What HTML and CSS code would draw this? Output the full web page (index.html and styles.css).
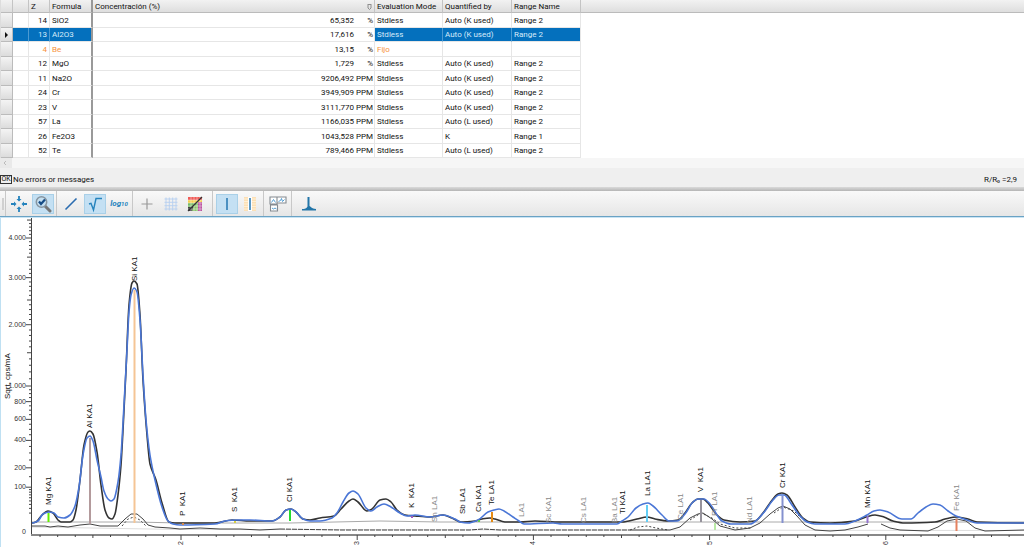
FILE: index.html
```html
<!DOCTYPE html>
<html lang="es">
<head>
    <meta charset="UTF-8">
    <meta name="viewport" content="width=device-width, initial-scale=1.0">
    <title>Spectrum</title>
    <link rel="stylesheet" href="styles.css">
</head>
<body>
    <div class="results">
        <table class="results__table">
            <colgroup>
                <col class="col-mark"><col class="col-flag"><col class="col-z"><col class="col-formula">
                <col class="col-conc"><col class="col-mode"><col class="col-quant"><col class="col-range"><col>
            </colgroup>
            <thead>
                <tr><th></th><th></th><th>Z</th><th>Formula</th><th><div class="sort">Concentración (%)<svg class="sort__icon" viewBox="0 0 5 6"><path d="M.5 .5h4M1 1v3l1.500 1.500L4 4V1" fill="none" stroke="#777" stroke-width=".8"/></svg></div></th><th>Evaluation Mode</th><th>Quantified by</th><th>Range Name</th><th></th></tr>
            </thead>
            <tbody>
                <tr><td></td><td></td><td>14</td><td>SiO2</td><td>65,352<span class="unit">%</span></td><td>Stdless</td><td>Auto (K used)</td><td>Range 2</td><td></td></tr>
                <tr class="selected"><td><i class="marker"></i></td><td></td><td>13</td><td>Al2O3</td><td>17,616<span class="unit">%</span></td><td>Stdless</td><td>Auto (K used)</td><td>Range 2</td><td></td></tr>
                <tr class="fixed"><td></td><td></td><td>4</td><td>Be</td><td>13,15<span class="unit">%</span></td><td>Fijo</td><td></td><td></td><td></td></tr>
                <tr><td></td><td></td><td>12</td><td>MgO</td><td>1,729<span class="unit">%</span></td><td>Stdless</td><td>Auto (K used)</td><td>Range 2</td><td></td></tr>
                <tr><td></td><td></td><td>11</td><td>Na2O</td><td>9206,492<span class="unit">PPM</span></td><td>Stdless</td><td>Auto (K used)</td><td>Range 2</td><td></td></tr>
                <tr><td></td><td></td><td>24</td><td>Cr</td><td>3949,909<span class="unit">PPM</span></td><td>Stdless</td><td>Auto (K used)</td><td>Range 2</td><td></td></tr>
                <tr><td></td><td></td><td>23</td><td>V</td><td>3111,770<span class="unit">PPM</span></td><td>Stdless</td><td>Auto (K used)</td><td>Range 2</td><td></td></tr>
                <tr><td></td><td></td><td>57</td><td>La</td><td>1166,035<span class="unit">PPM</span></td><td>Stdless</td><td>Auto (L used)</td><td>Range 2</td><td></td></tr>
                <tr><td></td><td></td><td>26</td><td>Fe2O3</td><td>1043,528<span class="unit">PPM</span></td><td>Stdless</td><td>K</td><td>Range 1</td><td></td></tr>
                <tr><td></td><td></td><td>52</td><td>Te</td><td>789,466<span class="unit">PPM</span></td><td>Stdless</td><td>Auto (L used)</td><td>Range 2</td><td></td></tr>
            </tbody>
        </table>
        <div class="scrollbar"><button class="scrollbar__button" aria-label="Scroll left"><svg viewBox="0 0 8 8"><path d="M5 2L3 4l2 2" fill="none" stroke="#bbb"/></svg></button></div>
    </div>

    <div class="status">
        <span class="status__ok">OK</span>
        <span>No errors or messages</span>
        <span class="status__ratio">R/R₀ =2,9</span>
    </div>
    <div class="splitter"></div>

    <div class="toolbar">
        <span class="toolbar__grip"></span>
        <div class="toolbar__group">
            <button class="tool" aria-label="Fit"><svg viewBox="0 0 18 18"><g fill="#2583bd"><path d="M9 6.500L6.500 4h1.600V1h1.800v3h1.600zM9 11.500L6.500 14h1.600v3h1.800v-3h1.600zM6.500 9L4 6.500v1.600H1v1.800h3v1.600zM11.500 9L14 6.500v1.600h3v1.800h-3v1.600z"/></g></svg></button>
            <button class="tool tool--on" aria-label="Zoom"><svg viewBox="0 0 18 18"><path d="M11 11l5 5" stroke="#777" stroke-width="3" stroke-linecap="round"/><circle cx="7.500" cy="7" r="5.200" fill="#c4dff0" stroke="#8795a0" stroke-width="1.500"/><path d="M5 6.500l2 2.500 4-4.500" fill="none" stroke="#164c86" stroke-width="2.200"/></svg></button>
        </div>
        <div class="toolbar__group">
            <button class="tool" aria-label="Linear"><svg viewBox="0 0 18 18"><path d="M3.500 14.500l11-11" stroke="#2b6cb0" stroke-width="1.600"/></svg></button>
            <button class="tool tool--on" aria-label="Square root"><svg viewBox="0 0 18 18"><path d="M3 9l2-.7L7.500 15 10 3.500h6" fill="none" stroke="#2583bd" stroke-width="1.400"/></svg></button>
            <button class="tool tool--log" aria-label="Logarithm">log<sub>10</sub></button>
        </div>
        <div class="toolbar__group toolbar__group--wide">
            <button class="tool" aria-label="Cursor"><svg viewBox="0 0 18 18"><path d="M9 3.500v11M3.500 9h11" stroke="#999" stroke-width="1.200"/></svg></button>
            <button class="tool" aria-label="Grid"><svg viewBox="0 0 18 18"><path d="M4 2.500v13M7.300 2.500v13M10.700 2.500v13M14 2.500v13M2.500 4h13M2.500 7.300h13M2.500 10.700h13M2.500 14h13" stroke="#b6cff0" stroke-width=".9"/></svg></button>
            <button class="tool" aria-label="Colours"><svg viewBox="0 0 18 18"><path fill="#f05b56" d="M2 2h14v3H2z"/><path fill="#f4cf4d" d="M2 5h14v3H2z"/><path fill="#77bb65" d="M2 8h14v4H2z"/><path fill="#444" d="M2 12h14v4H2z"/><path fill="#8cc46c" d="M8 10h4v6H6z"/><path fill="#bb52a0" d="M12 7h4v9h-4z"/><path d="M5 2v14M8 2v14M11 2v14M14 2v14M2 5h14M2 8h14M2 11h14M2 14h14" stroke="#fff" stroke-width=".6" opacity=".7"/><path d="M2 16L16 2" stroke="#333" stroke-width="1.200"/></svg></button>
        </div>
        <div class="toolbar__group toolbar__group--lines">
            <button class="tool tool--on" aria-label="Single line"><svg viewBox="0 0 18 18"><path d="M9 3v12" stroke="#2376b0" stroke-width="1.500"/></svg></button>
            <button class="tool" aria-label="Line with range"><svg viewBox="0 0 18 18"><path fill="#fff0d6" d="M3 2h12v14H3z"/><path d="M4 2v14M6 2v14M12 2v14M14 2v14" stroke="#f8cf93" stroke-dasharray="1.500 1"/><path fill="#fff" d="M7 2h4v14H7z"/><path d="M9 3v12" stroke="#2376b0" stroke-width="1.500"/></svg></button>
        </div>
        <div class="toolbar__group">
            <button class="tool" aria-label="Windows"><svg viewBox="0 0 18 18"><g fill="#fff" stroke="#858b91" stroke-width="1.100"><path d="M1 2h7v7H1zM8 2h9v6H8zM1.500 10h7v6h-7z"/></g><path d="M2.500 7.500l2-3 2 3M9.500 6.500l2-1 1-2 1 3 2-2M3 13l1.500 1L6 13l1.500 1" fill="none" stroke="#4293cd" stroke-width=".9"/></svg></button>
        </div>
        <div class="toolbar__group toolbar__group--last">
            <button class="tool" aria-label="Peak"><svg viewBox="0 0 18 18"><path d="M2 15.500v-1.500c3 0 4.500-.5 5.500-2.500V2h2v9c1 0 2 3 6.500 3v1.500z" fill="#2275a8"/></svg></button>
        </div>
    </div>

    <div class="chart">
        <svg class="chart__svg" viewBox="0 218 1024 329">
            <g class="background">
                <path d="M32 522H135L180 523H290L380 521L440 522H1024"/>
                <path class="background--low" d="M32 527L180 529.500 1024 530.500"/>
            </g>
            <g class="scatter">
                <polyline points="32,526 45,526 50,527 58,526 68,527 80,525 90,524 100,526 118,526 125,519 131,514 137,514 143,519 148,525 155,527 170,528 180,529 200,528 220,529 240,529 260,530 280,529"/>
                <polyline class="dash" points="280,529 340,530 400,530 470,530 483,529 500,530 630,530"/>
                <polyline class="dots" points="630,530 638,527 647,526 656,528 668,530"/>
                <polyline points="630,530 670,530 680,527 690,518 698,514 703,513 712,519 720,526 735,530 750,528 760,523 770,514 778,508 783,506 790,509 797,516 805,525 815,530 830,531 845,530 858,527 868,524"/>
                <polyline points="881,524 890,528 900,530 928,531 938,527 947,521 957,519 966,521 975,528 985,531 1024,530"/>
                <polyline class="dots" points="122,526 128,519 134,517 140,520 146,526"/>
                <polyline class="dots" points="690,520 701,513 712,518 720,524 735,528 752,528"/>
                <polyline class="dots" points="774,513 783,507 794,511 801,518"/>
            </g>
            <g id="curves"></g>
            <g class="lines">
                <path stroke="#66f000" d="M48.500 513V522"/>
                <path stroke="#b39a9c" d="M90 438V524"/>
                <path stroke="#f5c595" d="M134.500 290V523"/>
                <path stroke="#25dc31" d="M290 510V521"/>
                <path stroke="#e58a13" d="M492 512V522"/>
                <path stroke="#63cef5" d="M647 505V522"/>
                <path stroke="#96939c" d="M701 500V522"/>
                <path stroke="#b9eaa5" d="M715 523V530"/>
                <path stroke="#8491cf" d="M782.500 496V523"/>
                <path stroke="#9573cf" d="M867.500 516V523"/>
                <path stroke="#e5815f" d="M956.500 519V531"/>
                <path stroke="#d88a4a" d="M182 524h2"/>
                <path stroke="#d8d040" d="M234 522h2"/>
                <path stroke="#a35cc0" d="M411 517h2"/>
                <path stroke="#63c850" d="M478 521h2"/>
            </g>
            <g id="axes" class="axes"></g>
            <g id="labels" class="labels"></g>
        </svg>
    </div>
    <script src="chart.js"></script>
</body>
</html>
```
FILE: styles.css
```css
* {
    box-sizing: border-box;
}
body {
    margin: 0;
    background: #fff;
    color: #111;
    font-family: Roboto, sans-serif;
    font-size: 8px;
    line-height: 12px;
}
button {
    padding: 0;
    border: 1px solid transparent;
    background: transparent;
    font: inherit;
}
.results__table {
    width: 100%;
    table-layout: fixed;
    border-collapse: separate;
    border-spacing: 0;
    border-left: 1px solid #ddd;
}
.col-mark { width: 12px; }
.col-flag { width: 16px; }
.col-z { width: 21px; }
.col-formula { width: 43px; }
.col-conc { width: 282px; }
.col-mode { width: 68px; }
.col-quant { width: 69px; }
.col-range { width: 69px; }
th,
td {
    height: 14px;
    padding: 1px 2px 0;
    border-right: 1px solid #e6e6e6;
    border-bottom: 1px solid #e6e6e6;
    text-align: left;
    font-weight: normal;
    white-space: nowrap;
    line-height: 12px;
}
th {
    height: 13px;
    border-right-color: #c4c4c4;
    border-bottom-color: #bbb;
    background: linear-gradient(#f2f2f2, #dedede);
    line-height: 11px;
}
tbody tr:nth-child(odd) td {
    height: 15px;
}
td:nth-child(3) {
    text-align: right;
}
th:nth-child(4),
td:nth-child(4) {
    border-right: 2px solid #999;
}
td:nth-child(5) {
    padding-right: 1px;
    text-align: right;
}
td:first-child {
    padding: 0 4px;
    border-right-color: #bbb;
    border-bottom-color: #bbb;
    background: linear-gradient(#f4f4f4, #dcdcdc);
}
th:last-child,
td:last-child {
    border-right: 0;
}
td:last-child {
    border-bottom: 0;
}
.sort {
    display: flex;
    align-items: center;
    justify-content: space-between;
}
.sort__icon {
    width: 5px;
    height: 6px;
}
.unit {
    display: inline-block;
    width: 19px;
}
.marker {
    display: block;
    width: 0;
    border: 3px solid transparent;
    border-left: 3px solid #111;
    border-right: 0;
}
.selected td:nth-child(n+2):nth-child(-n+4),
.selected td:nth-child(n+6):nth-child(-n+8) {
    background: #0470bd;
    color: #d6ebfa;
}
.selected td:nth-child(2),
.selected td:nth-child(3),
.selected td:nth-child(6),
.selected td:nth-child(7) {
    border-right-color: #4c9ad2;
}
.fixed td {
    color: #f7933a;
}
.fixed td:nth-child(5) {
    color: #111;
}
.scrollbar {
    height: 10px;
    background: #f6f6f6;
}
.scrollbar__button {
    display: block;
    width: 12px;
    height: 10px;
    background: #e9e9e9;
}
.scrollbar__button svg {
    display: block;
    width: 8px;
    height: 8px;
}
.status {
    display: flex;
    align-items: center;
    gap: 1px;
    height: 19px;
    padding: 4px 7px 0 0;
    background: #efefef;
}
.status__ok {
    width: 12px;
    border: 1px solid #333;
    line-height: 7px;
    text-align: center;
    font-size: 7px;
}
.status__ratio {
    margin-left: auto;
}
.splitter {
    height: 4px;
    background: linear-gradient(#dadada, #b5b5b5);
}
.toolbar {
    display: flex;
    align-items: center;
    height: 26px;
    border-bottom: 1px solid #6aa2c4;
    background: linear-gradient(#f9f9f9, #e6e6e6);
}
.toolbar__grip {
    width: 2px;
    height: 12px;
    margin: 0 1px 0 2px;
    background: #d0d0d0;
}
.toolbar__group {
    display: flex;
    align-items: center;
    gap: 2px;
    height: 100%;
    padding: 0 2px;
    border-left: 1px solid #c8c8c8;
}
.toolbar__group + .toolbar__group {
    padding-left: 3px;
}
.toolbar__group.toolbar__group--wide {
    padding-right: 6px;
}
.toolbar__group--lines {
    gap: 1px;
}
.toolbar__group.toolbar__group--last {
    padding-left: 6px;
}
.tool {
    display: flex;
    align-items: center;
    justify-content: center;
    width: 22px;
    height: 20px;
}
.tool svg {
    width: 18px;
    height: 18px;
}
.tool--on {
    border-color: #a9d0e8;
    background: #c4e0f3;
}
.tool--log {
    color: #2583bd;
    font-style: italic;
    font-weight: bold;
}
.tool--log sub {
    font-size: 6px;
}
.chart {
    border-top: 1px solid #c9e4f4;
    box-shadow: inset 1px 0 #bfe0f2;
}
.chart__svg {
    display: block;
    width: 100%;
    font-family: "Liberation Sans", sans-serif;
}
.curve {
    fill: none;
    stroke-width: 1.6;
    stroke-linejoin: round;
}
.curve--measured {
    stroke: #333;
}
.curve--fitted {
    stroke: #4a76d6;
}
.background {
    fill: none;
    stroke: #aaa;
}
.background--low {
    stroke: #ddd;
}
.scatter {
    fill: none;
    stroke: #444;
}
.dash {
    stroke-dasharray: 5 1;
}
.dots {
    stroke-dasharray: 2 2;
}
.lines {
    stroke-width: 2;
}
.axes path {
    fill: none;
    stroke: #444;
}
.axes .axes__base {
    stroke: #888;
    stroke-width: 2;
}
.axes text {
    fill: #333;
    font-size: 7px;
}
.axes .axes__title,
.labels text {
    fill: #111;
    font-size: 8px;
    white-space: pre;
}
.labels .weak {
    fill: #888;
}
```
FILE: chart.js
```js
const curves = document.getElementById('curves');
const axes = document.getElementById('axes');
const labels = document.getElementById('labels');
const svgNs = 'http://www.w3.org/2000/svg';

const left = 31;
const base = 534;
const yPos = (value) => base - Math.sqrt(value) * 4.68;
const xPos = (energy) => 181 + (energy - 2) * 176.2;

function addPath(parent, d, className) {
    const path = document.createElementNS(svgNs, 'path');
    path.setAttribute('d', d);
    if (className) path.setAttribute('class', className);
    parent.appendChild(path);
}

function addText(parent, text, x, y, className, rotated) {
    const el = document.createElementNS(svgNs, 'text');
    el.textContent = text;
    if (rotated) {
        el.setAttribute('transform', `translate(${x} ${y}) rotate(-90)`);
    } else {
        el.setAttribute('x', x);
        el.setAttribute('y', y);
        el.setAttribute('text-anchor', 'end');
    }
    if (className) el.setAttribute('class', className);
    parent.appendChild(el);
}

// rounds the corners between the measured points
function smooth(text) {
    const p = text.split(' ').map((pair) => pair.split(',').map(Number));
    let d = `M${p[0]}`;
    for (let i = 0; i < p.length - 1; i++) {
        const a = p[i - 1] || p[i];
        const b = p[i];
        const c = p[i + 1];
        const e = p[i + 2] || c;
        const step = (c[0] - b[0]) / 3;
        const s1 = slope(a, b, c);
        const s2 = slope(b, c, e);
        d += `C${b[0] + step} ${b[1] + s1 * step} ${c[0] - step} ${c[1] - s2 * step} ${c}`;
    }
    return d;
}

function slope(a, b, c) {
    const before = b[0] === a[0] ? 0 : (b[1] - a[1]) / (b[0] - a[0]);
    const after = c[0] === b[0] ? 0 : (c[1] - b[1]) / (c[0] - b[0]);
    return before * after <= 0 ? 0 : 2 * before * after / (before + after);
}

const measured = '32,523 36,522 42,515 48,511 53,513 58,520 61,522 70,522 73,520 76,510 80,480 84,445 88,432 90,431 93,434 97,452 101,485 105,510 109,518 112,519 115,514 118,495 121,465 123,430 126,370 129,305 132,283 134,281 137,284 140,315 143,380 147,435 150,464 156,480 162,503 169,522 175,523 215,523 232,520 250,521 272,521 280,517 286,510 291,509 296,512 303,519 310,520 320,518 334,516 341,509 349,501 353,499 358,502 367,511 372,509 380,500 386,499 391,502 397,510 405,515 415,516 430,517 443,515 452,518 461,522 475,521 482,519 490,518 495,519 505,522 520,522 535,521 560,522 622,522 637,519 647,517 655,519 668,521 678,520 685,513 692,503 698,499 703,499 708,503 716,514 724,520 740,522 755,521 763,513 770,503 778,494 782,493 787,495 795,507 803,518 810,522 830,523 855,521 866,517 875,515 884,517 893,521 905,523 935,522 945,519 957,517 968,519 977,522 1024,523';
const fitted = '32,523 38,521 43,514 49,512 54,513 58,517 64,518 70,515 75,506 79,487 83,455 87,438 90,436 93,441 97,460 101,477 104,491 108,499 111,501 114,499 118,482 121,455 124,405 127,350 129,312 131,295 134,288 137,292 140,320 143,375 146,420 150,455 155,480 162,507 168,521 173,524 180,525 215,524 225,521 237,520 250,520 272,521 280,517 286,510 291,509 296,512 303,519 310,521 320,521 332,518 337,513 343,502 349,493 353,491 358,494 366,508 371,511 377,507 384,504 391,507 400,513 407,516 415,515 430,517 443,515 455,519 460,522 468,523 478,520 488,512 494,510 499,509 504,511 513,517 519,521 524,524 553,523 562,524 617,524 622,521 628,517 636,508 643,504 648,503 653,506 662,515 669,521 677,521 685,514 693,502 698,499 704,499 710,504 722,521 731,524 750,524 758,519 765,511 773,500 779,495 784,495 792,505 800,516 807,522 815,524 845,524 855,521 867,515 874,511 880,510 888,512 902,519 911,519 918,513 926,507 933,504 940,505 948,511 956,516 967,520 977,523 1024,523';
addPath(curves, smooth(measured), 'curve curve--measured');
addPath(curves, smooth(fitted), 'curve curve--fitted');

// vertical axis, square root scale
let ticks = '';
for (let v = 20; v <= 4500; v += v < 100 ? 10 : v < 1000 ? 50 : 100) {
    const long = v >= 1000 ? v % 500 === 0 : v % 200 === 0 || v === 100;
    const size = v >= 1000 && v % 1000 === 0 || v < 1000 && long ? 5 : long ? 4 : 2;
    ticks += `M${left - size} ${yPos(v)}H${left}`;
}
addPath(axes, ticks);
addPath(axes, `M${left + 0.5} 218V${base + 1}`);
addPath(axes, `M${left} ${base + 1}H1024`, 'axes__base');
[[4000, '4.000'], [3000, '3.000'], [2000, '2.000'], [1000, '1.000'], [800, '800'], [600, '600'], [400, '400'], [200, '200'], [100, '100']].forEach(([v, text]) => {
    addText(axes, text, 26, yPos(v) + 2);
});
addText(axes, '0', 26, base);
addText(axes, 'Sqrt, cps/mA', 10, 399, 'axes__title', true);

// energy axis
ticks = '';
for (let i = 12; i <= 67; i++) {
    const size = i % 10 === 0 ? 5 : i % 5 === 0 ? 3 : 2;
    ticks += `M${xPos(i / 10)} ${base + 1}v${size}`;
    if (i % 10 === 0) addText(axes, String(i / 10), xPos(i / 10) + 2, 545, '', true);
}
addPath(axes, ticks);

const elements = [
    ['Mg KA1', 49, 505], ['Al KA1', 90, 428], ['Si KA1', 135, 281],
    ['P  KA1', 183, 516], ['S  KA1', 235, 512], ['Cl KA1', 290, 502],
    ['K  KA1', 412, 508], ['Sn LA1', 435, 522, 'weak'], ['Sb LA1', 463, 514],
    ['Ca KA1', 479, 512], ['Te LA1', 492, 505], ['LA1', 522, 517, 'weak'],
    ['Sc KA1', 549, 523, 'weak'], ['Cs LA1', 584, 523, 'weak'], ['Ba LA1', 615, 523, 'weak'],
    ['Ti KA1', 623, 514], ['La LA1', 648, 496], ['Ce LA1', 681, 520, 'weak'],
    ['V  KA1', 701, 492], ['Pr LA1', 715, 516, 'weak'], ['Nd LA1', 750, 523, 'weak'],
    ['Cr KA1', 783, 488], ['Mn KA1', 868, 508], ['Fe KA1', 957, 511, 'weak']
];
elements.forEach(([text, x, y, className]) => {
    addText(labels, text, x + 2, y, className, true);
});
```
